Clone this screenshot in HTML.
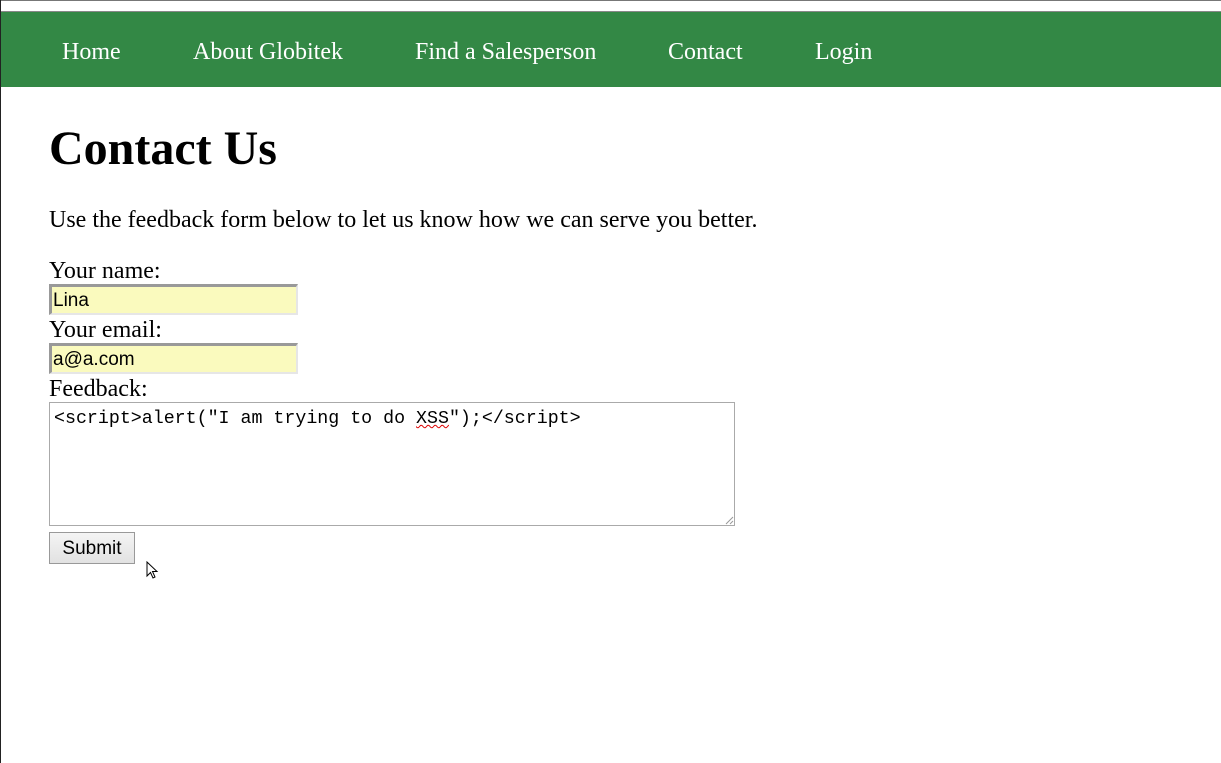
<!DOCTYPE html>
<html><head><style>
*{margin:0;padding:0;box-sizing:border-box}
html,body{width:1221px;height:763px;background:#fff;overflow:hidden;position:relative;font-family:"Liberation Serif",serif;color:#000}
.a{position:absolute;white-space:nowrap}
.nav{position:absolute;left:0;top:12px;width:1221px;height:75px;background:#338845}
.nav span{position:absolute;top:26px;color:#fff;font-size:24px;line-height:28px}
.lab{font-size:24px;line-height:28px}
.inp{position:absolute;left:49px;width:249px;height:31px;background:#fafabe;border-top:3px solid #999;border-left:3px solid #999;border-right:2px solid #e6e6e6;border-bottom:2px solid #e6e6e6;font-family:"Liberation Sans",sans-serif;font-size:19px;line-height:27px;padding-left:1px}
</style></head><body>
<div class="a" style="left:0;top:0;width:1221px;height:1px;background:#777"></div>
<div class="a" style="left:0;top:11px;width:1221px;height:1px;background:#888"></div>
<div class="nav">
<span style="left:62px">Home</span>
<span style="left:193px">About Globitek</span>
<span style="left:415px">Find a Salesperson</span>
<span style="left:668px">Contact</span>
<span style="left:815px">Login</span>
</div>
<div class="a" style="left:0;top:0;width:1px;height:763px;background:#222"></div>
<div class="a" style="left:49px;top:121px;font-size:48px;font-weight:bold;line-height:56px">Contact Us</div>
<div class="a" style="left:49px;top:206px;font-size:24px;line-height:28px">Use the feedback form below to let us know how we can serve you better.</div>
<div class="a lab" style="left:49px;top:257px">Your name:</div>
<div class="inp" style="top:284px">Lina</div>
<div class="a lab" style="left:49px;top:316px">Your email:</div>
<div class="inp" style="top:343px">a@a.com</div>
<div class="a lab" style="left:49px;top:375px">Feedback:</div>
<div class="a" style="left:49px;top:402px;width:686px;height:124px;border:1px solid #aaa"></div>
<div class="a" style="left:54px;top:408px;font-family:'Liberation Mono',monospace;font-size:18.3px;line-height:22px">&lt;script&gt;alert("I am trying to do <span style="text-decoration:underline wavy #d00;text-decoration-thickness:1px">XSS</span>");&lt;/script&gt;</div>
<svg class="a" style="left:724px;top:515px" width="10" height="10"><path d="M9 2L2 9M9 6L6 9" stroke="#999"/></svg>
<div class="a" style="left:49px;top:532px;width:86px;height:32px;border:1px solid #999;background:linear-gradient(#f4f4f4,#e2e2e2);font-family:'Liberation Sans',sans-serif;font-size:19px;line-height:31px;text-align:center">Submit</div>
<svg class="a" style="left:146px;top:561px" width="14" height="20"><path d="M1 1L1 15L4.5 11.5L7 17L9 16L6.5 10.5L11 10.5Z" fill="#fff" stroke="#000" stroke-width="1"/></svg>
</body></html>
